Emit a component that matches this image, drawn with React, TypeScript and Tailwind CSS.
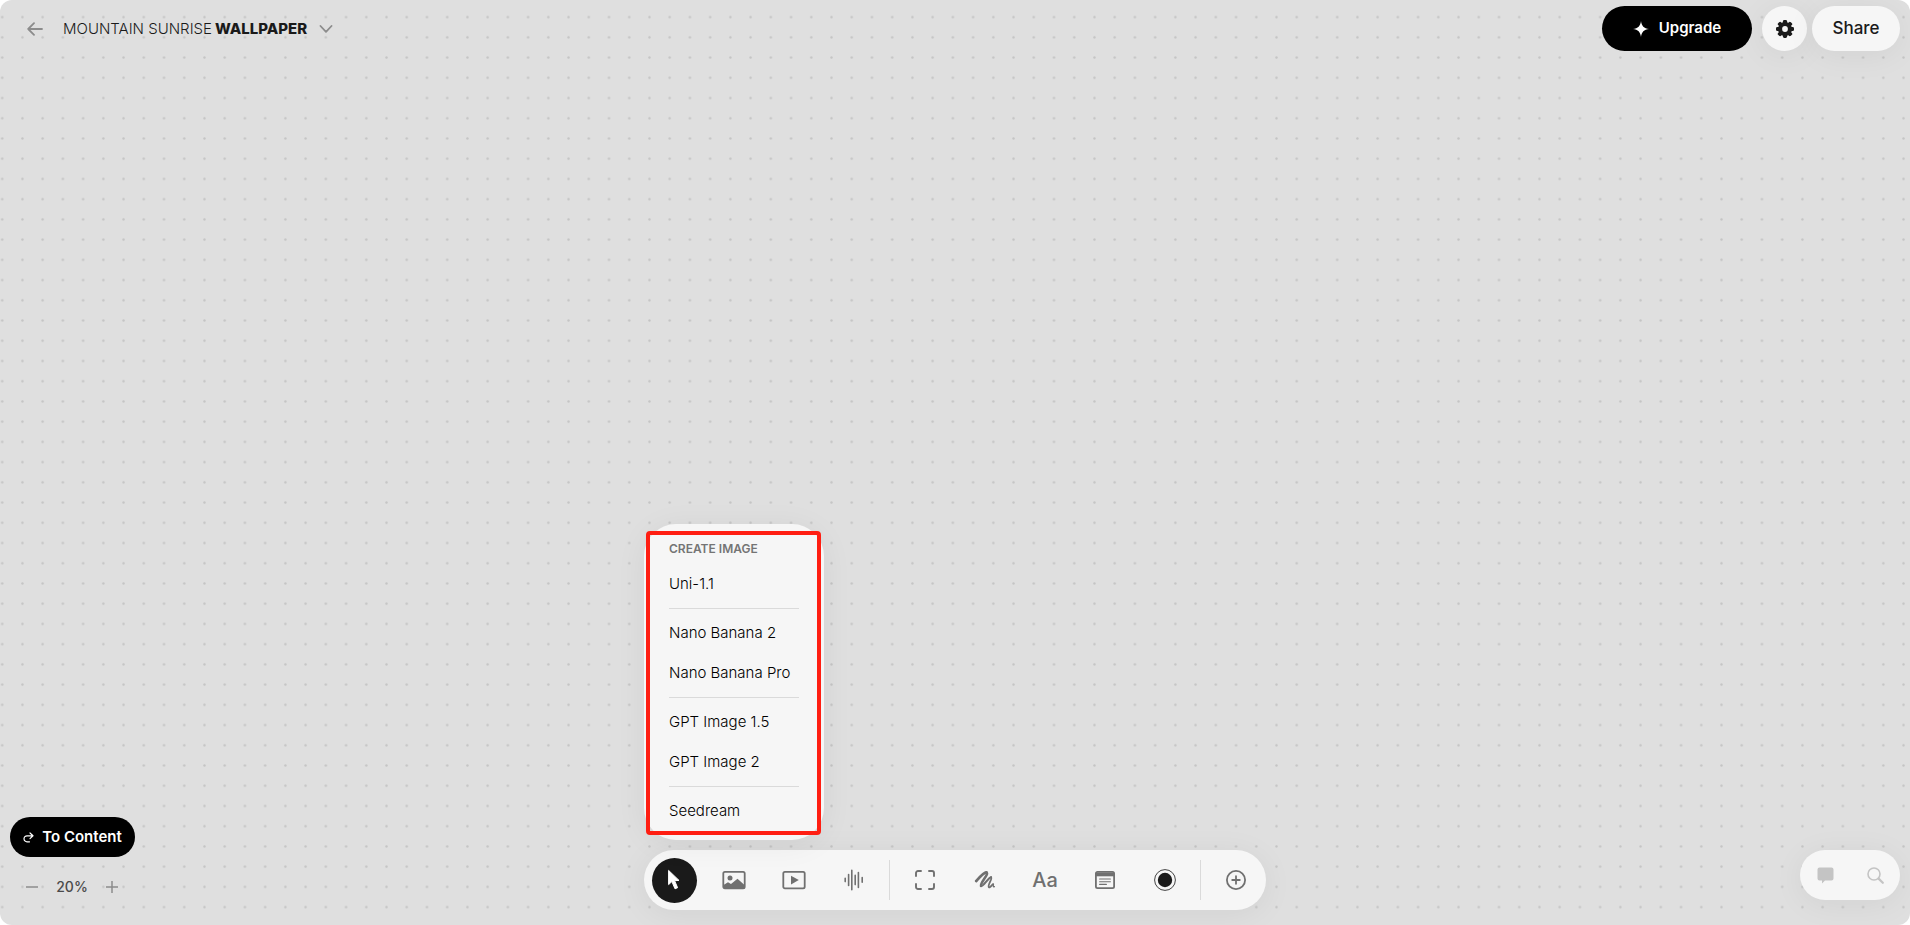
import { useState } from "react";
import clsx from "clsx";

const modelGroups = [
  ["Uni-1.1"],
  ["Nano Banana 2", "Nano Banana Pro"],
  ["GPT Image 1.5", "GPT Image 2"],
  ["Seedream"],
];

function CursorIcon() {
  return (
    <svg width="14" height="22" viewBox="0 0 14 22" fill="currentColor" stroke="currentColor" strokeLinejoin="round">
      <path d="M1.6 1.4 L1.6 15.6 L4.9 12.6 L8 19.8 L10.6 18.7 L7.6 11.7 L12 11.4 Z" strokeWidth="1" />
    </svg>
  );
}

function ImageIcon() {
  return (
    <svg width="24" height="20" viewBox="0 0 24 20" fill="none">
      <rect x="1.3" y="1.8" width="21.4" height="16.6" rx="1.6" stroke="currentColor" strokeWidth="1.8" />
      <circle cx="8" cy="8" r="2.5" fill="currentColor" />
      <path d="M1.5 15 L6 12.2 L9 14 L15.5 8.8 L22.5 15 V18.5 H1.5 Z" fill="currentColor" />
    </svg>
  );
}

function VideoIcon() {
  return (
    <svg width="24" height="20" viewBox="0 0 24 20" fill="none">
      <rect x="1.3" y="1.8" width="21.4" height="16.6" rx="1.6" stroke="currentColor" strokeWidth="1.8" />
      <path d="M9 5.8 L16.8 10.1 L9 14.4 Z" fill="currentColor" />
    </svg>
  );
}

function AudioIcon() {
  return (
    <svg width="20" height="22" viewBox="0 0 20 22" fill="none" stroke="currentColor" strokeWidth="1.6" strokeLinecap="round">
      <path d="M1.2 9.2v3.4M4.6 5.6v10.8M7.8 1.2v19.6M11.2 6.4v9.2M14.4 3.6v14.8M18.2 8.6v4.6" />
    </svg>
  );
}

function FrameIcon() {
  return (
    <svg width="20" height="20" viewBox="0 0 20 20" fill="none" stroke="currentColor" strokeWidth="1.9" strokeLinecap="round">
      <path d="M1 6V3a2 2 0 0 1 2-2h3M14 1h3a2 2 0 0 1 2 2v3M19 14v3a2 2 0 0 1-2 2h-3M6 19H3a2 2 0 0 1-2-2v-3" />
    </svg>
  );
}

function DrawIcon() {
  return (
    <svg width="22" height="20" viewBox="0 0 22 20" fill="none" stroke="currentColor" strokeLinecap="round" strokeLinejoin="round">
      <path d="M2.2 11 C5 8 9.6 2.6 12.4 2.4" strokeWidth="2.8" />
      <path d="M12.4 2.4 C15.6 3.6 6.2 12.4 7 16" strokeWidth="2.5" />
      <path d="M7 16 C9 17 13.8 8 17 7.2" strokeWidth="2.2" />
      <path d="M17 7.2 C19 8.4 13.4 14.6 14.8 17.2 C16 18.4 18 14.6 19.2 14.2" strokeWidth="1.8" />
      <path d="M19.2 14.2 C19.8 14.6 18.4 17.4 20.4 16.6" strokeWidth="1.3" />
    </svg>
  );
}

function NoteIcon() {
  return (
    <svg width="20" height="20" viewBox="0 0 20 20" fill="none">
      <rect x="0.9" y="1.9" width="18.2" height="16.2" rx="1.6" stroke="currentColor" strokeWidth="1.8" />
      <path d="M1 2.5h18v3.8H1z" fill="currentColor" />
      <path d="M4.6 9h10.8M4.6 11.7h10.8M4.6 14.4h6.8" stroke="currentColor" strokeWidth="1.1" strokeLinecap="round" />
    </svg>
  );
}

function SwatchIcon() {
  return (
    <svg width="22" height="22" viewBox="0 0 22 22">
      <circle cx="11" cy="11" r="10.4" fill="none" stroke="#444444" strokeWidth="1" />
      <circle cx="11" cy="11" r="7.2" fill="#1a1a1a" />
    </svg>
  );
}

function AddIcon() {
  return (
    <svg width="20" height="20" viewBox="0 0 20 20" fill="none" stroke="currentColor" strokeWidth="1.8" strokeLinecap="round">
      <circle cx="10" cy="10" r="9.1" />
      <path d="M10 6.2v7.6M6.2 10h7.6" />
    </svg>
  );
}

function GearIcon() {
  return (
    <svg width="18" height="18" viewBox="-9 -9 18 18">
      <g fill="#1a1a1a">
        {[0, 45, 90, 135].map((angle) => (
          <rect key={angle} x="-2.1" y="-9" width="4.2" height="18" rx="1.4" transform={`rotate(${angle})`} />
        ))}
        <circle r="7" />
      </g>
      <circle r="2.9" fill="#f6f6f6" />
    </svg>
  );
}

const createTools = [
  { id: "select", label: "Select", icon: <CursorIcon /> },
  { id: "image", label: "Image", icon: <ImageIcon /> },
  { id: "video", label: "Video", icon: <VideoIcon /> },
  { id: "audio", label: "Audio", icon: <AudioIcon /> },
];

const canvasTools = [
  { id: "frame", label: "Frame", icon: <FrameIcon /> },
  { id: "draw", label: "Draw", icon: <DrawIcon /> },
  { id: "text", label: "Aa", icon: <span className="text-xl leading-5 font-medium">Aa</span> },
  { id: "note", label: "Note", icon: <NoteIcon /> },
  { id: "color", label: "Color", icon: <SwatchIcon /> },
];

type Tool = { id: string; label: string; icon: React.ReactNode };

function ToolButton({ tool, active, onClick }: { tool: Tool; active: boolean; onClick: () => void }) {
  return (
    <button aria-label={tool.label} onClick={onClick} className="flex size-[60px] items-center justify-center">
      <span
        className={clsx(
          "flex size-[45px] items-center justify-center rounded-full",
          active ? "bg-[#1a1a1a] text-white" : "text-[#707070]"
        )}
      >
        {tool.icon}
      </span>
    </button>
  );
}

function DotGrid() {
  return (
    <svg className="absolute inset-0 size-full" aria-hidden="true">
      <defs>
        <pattern id="dots" x="-7.9" y="7" width="20.227" height="20.227" patternUnits="userSpaceOnUse">
          <circle cx="10.1" cy="10.1" r="1.2" fill="#c4c4c4" />
        </pattern>
      </defs>
      <rect width="100%" height="100%" fill="url(#dots)" />
    </svg>
  );
}

export default function App() {
  const [tool, setTool] = useState("select");
  const [zoom, setZoom] = useState(20);

  const renderTool = (t: Tool) => (
    <ToolButton key={t.id} tool={t} active={tool === t.id} onClick={() => setTool(t.id)} />
  );

  return (
    <div className="min-h-screen bg-white font-['Inter',sans-serif] text-[#1a1a1a]">
      <div className="relative flex min-h-screen flex-col justify-between overflow-hidden rounded-xl bg-[#dfdfdf]">
        <DotGrid />

        {/* Top bar */}
        <header className="relative flex items-start justify-between pt-1.5 pr-2.5 pl-[27px]">
          <div className="flex h-[45px] items-center">
            <button aria-label="Back" className="text-[#8c8c8c]">
              <svg width="16" height="14" viewBox="0 0 16 14" fill="none" stroke="currentColor" strokeWidth="1.8" strokeLinecap="round" strokeLinejoin="round">
                <path d="M15 7H1.2M7 1.2L1.2 7L7 12.8" />
              </svg>
            </button>
            <h1 className="ml-5 flex gap-[3px] text-[15px] leading-5 font-light">
              MOUNTAIN SUNRISE <b className="font-extrabold">WALLPAPER</b>
            </h1>
            <button aria-label="Project menu" className="ml-3 text-[#8c8c8c]">
              <svg width="14" height="8" viewBox="0 0 14 8" fill="none" stroke="currentColor" strokeWidth="1.8" strokeLinecap="round" strokeLinejoin="round">
                <path d="M1.5 1L7 6.8L12.5 1" />
              </svg>
            </button>
          </div>
          <div className="flex items-center">
            <button className="flex h-[45px] w-[150px] items-center justify-center gap-2.5 rounded-full bg-black text-[15px] font-semibold text-white">
              <svg width="16" height="16" viewBox="0 0 16 16" fill="currentColor">
                <path d="M8 0C8.6 5 11 7.4 16 8C11 8.6 8.6 11 8 16C7.4 11 5 8.6 0 8C5 7.4 7.4 5 8 0Z" />
              </svg>
              Upgrade
            </button>
            <button aria-label="Settings" className="ml-2.5 flex size-[45px] items-center justify-center rounded-full bg-[#f6f6f6] shadow-[0_4px_32px_rgba(0,0,0,0.06)]">
              <GearIcon />
            </button>
            <button className="ml-[5px] flex h-[45px] w-[88px] items-center justify-center rounded-full bg-[#f6f6f6] text-[17px] font-medium shadow-[0_4px_32px_rgba(0,0,0,0.06)]">
              Share
            </button>
          </div>
        </header>

        <footer className="relative grid grid-cols-[1fr_auto_1fr] items-end">
          {/* Zoom */}
          <div className="flex flex-col items-start pb-7 pl-2.5">
            <button className="flex h-10 w-[125px] items-center justify-center gap-2 rounded-full bg-black text-[15px] font-semibold text-white">
              <svg width="11" height="11" viewBox="0 0 11 11" fill="none" stroke="currentColor" strokeWidth="1.2" strokeLinecap="round" strokeLinejoin="round">
                <path d="M7 1L10 3.8L7 6.6M10 3.8H4a3 3 0 0 0-3 3a3 3 0 0 0 3 3h2.5" />
              </svg>
              To Content
            </button>
            <div className="mt-5 ml-4 flex items-center text-[#8c8c8c]">
              <button aria-label="Zoom out" onClick={() => setZoom(Math.max(5, zoom - 5))}>
                <svg width="12" height="12" viewBox="0 0 12 12" stroke="currentColor" strokeWidth="1.5">
                  <path d="M0 6h12" />
                </svg>
              </button>
              <span className="w-[68px] text-center text-sm leading-5 font-medium text-[#4a4a4a]">{zoom}%</span>
              <button aria-label="Zoom in" onClick={() => setZoom(zoom + 5)}>
                <svg width="12" height="12" viewBox="0 0 12 12" stroke="currentColor" strokeWidth="1.5">
                  <path d="M0 6h12M6 0v12" />
                </svg>
              </button>
            </div>
          </div>

          <div className="flex flex-col items-start gap-2.5 pb-[15px]">
            {/* Model menu */}
            <div className="relative w-[180px] rounded-[32px] bg-[#f6f6f6] px-[25px] pt-3 pb-[9px] shadow-[0_4px_32px_rgba(0,0,0,0.06)]">
              <h2 className="mb-0.5 text-xs leading-[26px] font-semibold text-[#747474]">CREATE IMAGE</h2>
              <ul className="divide-y divide-[#dadada]">
                {modelGroups.map((group) => (
                  <li key={group[0]} className="py-1 first:pt-0 last:pb-0">
                    {group.map((name) => (
                      <button key={name} className="block h-10 w-full text-left text-[15px] font-light whitespace-nowrap text-black">
                        {name}
                      </button>
                    ))}
                  </li>
                ))}
              </ul>
              <div className="pointer-events-none absolute top-[7px] right-[3px] bottom-[5px] left-0.5 rounded-sm border-4 border-[#ff1e12]" />
            </div>

            {/* Toolbar */}
            <div className="flex h-[60px] items-center rounded-full bg-[#f6f6f6] shadow-[0_4px_32px_rgba(0,0,0,0.06)]">
              {createTools.map(renderTool)}
              <div className="mx-[5px] h-10 w-px bg-[#dadada]" />
              {canvasTools.map(renderTool)}
              <div className="mx-[5px] h-10 w-px bg-[#dadada]" />
              {renderTool({ id: "add", label: "Add", icon: <AddIcon /> })}
            </div>
          </div>

          {/* Comments and search */}
          <div className="mr-2.5 mb-[25px] flex h-[50px] w-[100px] items-center justify-self-end rounded-full bg-[#f6f6f6] text-[#c4c4c4] shadow-[0_4px_32px_rgba(0,0,0,0.06)]">
            <button aria-label="Comments" className="flex h-full flex-1 items-center justify-center">
              <svg width="17" height="17" viewBox="0 0 17 17" fill="currentColor">
                <path d="M2.5 0.5h12a2 2 0 0 1 2 2v9a2 2 0 0 1-2 2H8L5 16.5V13.5H2.5a2 2 0 0 1-2-2v-9a2 2 0 0 1 2-2z" />
              </svg>
            </button>
            <button aria-label="Search" className="flex h-full flex-1 items-center justify-center">
              <svg width="17" height="17" viewBox="0 0 17 17" fill="none" stroke="currentColor" strokeLinecap="round">
                <circle cx="7" cy="7" r="6" strokeWidth="1.6" />
                <path d="M11.6 11.6L15.8 15.8" strokeWidth="2.2" />
              </svg>
            </button>
          </div>
        </footer>
      </div>
    </div>
  );
}
